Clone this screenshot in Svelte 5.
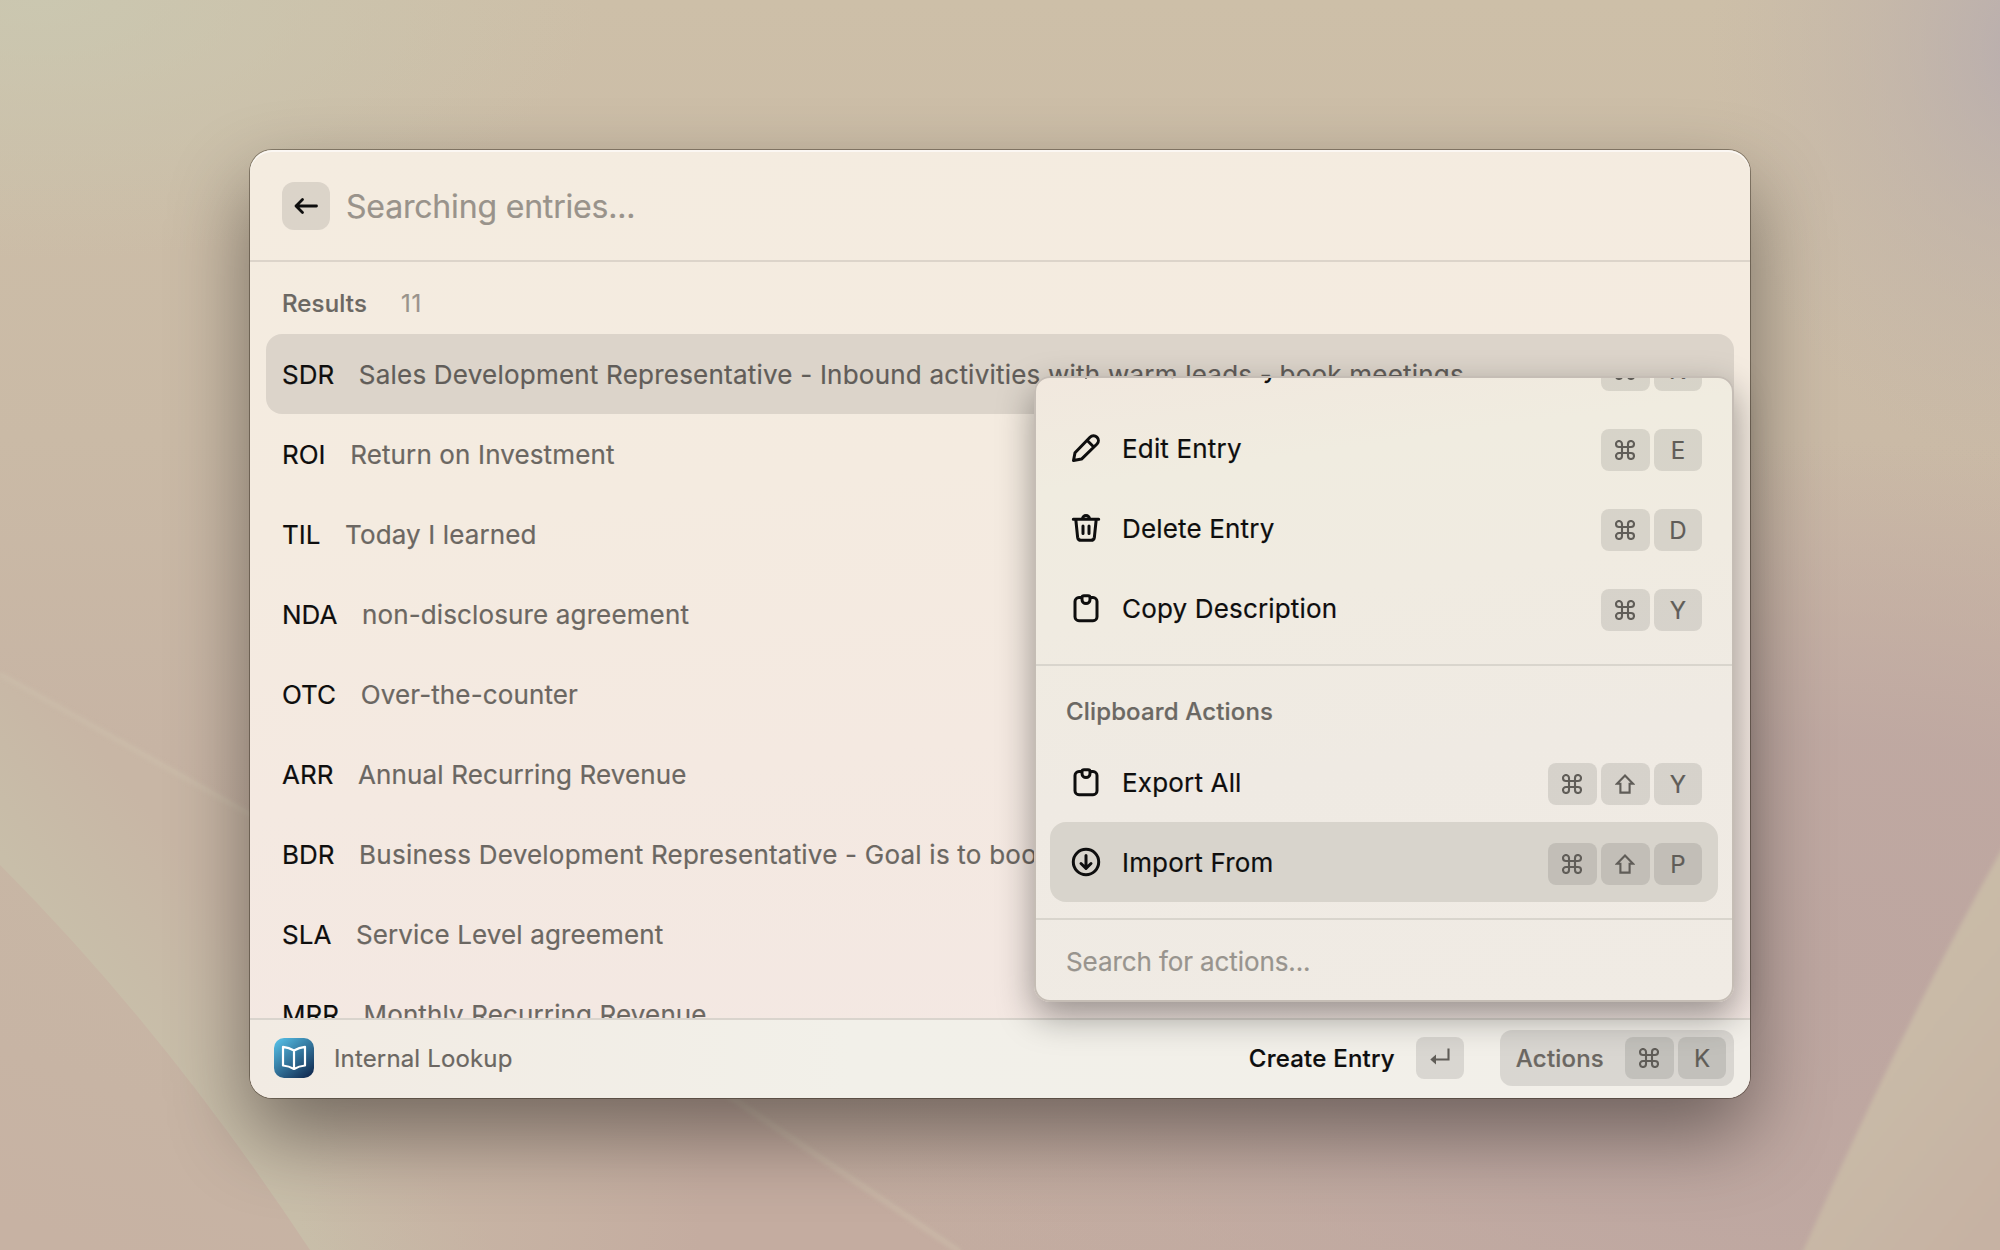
<script>
  const entries = [
    ['SDR', 'Sales Development Representative - Inbound activities with warm leads - book meetings'],
    ['ROI', 'Return on Investment'],
    ['TIL', 'Today I learned'],
    ['NDA', 'non-disclosure agreement'],
    ['OTC', 'Over-the-counter'],
    ['ARR', 'Annual Recurring Revenue'],
    ['BDR', 'Business Development Representative - Goal is to boo'],
    ['SLA', 'Service Level agreement'],
    ['MRR', 'Monthly Recurring Revenue'],
  ];
  const entryActions = [
    { icon: 'plus', label: 'Create Entry', keys: ['cmd', 'N'] },
    { icon: 'pencil', label: 'Edit Entry', keys: ['cmd', 'E'] },
    { icon: 'trash', label: 'Delete Entry', keys: ['cmd', 'D'] },
    { icon: 'clipboard', label: 'Copy Description', keys: ['cmd', 'Y'] },
  ];
  const clipboardActions = [
    { icon: 'clipboard', label: 'Export All', keys: ['cmd', 'shift', 'Y'] },
    { icon: 'download', label: 'Import From', keys: ['cmd', 'shift', 'P'], active: true },
  ];
</script>

{#snippet key(k)}
  <kbd class:wide={k === 'cmd' || k === 'shift'}>
    {#if k === 'cmd'}
      <svg class="glyph" viewBox="0 0 20 20"><path d="M7 7V4A3 3 0 1 0 4 7H16A3 3 0 1 0 13 4V16A3 3 0 1 0 16 13H4A3 3 0 1 0 7 16Z" /></svg>
    {:else if k === 'shift'}
      <svg class="glyph" viewBox="0 0 20 20"><path d="M10 1.6L18 9.8H14.6V18.6H5.4V9.8H2Z" /></svg>
    {:else if k === 'enter'}
      <svg class="glyph" viewBox="0 0 20 20"><path d="M18.5 .5V11.5H5" /><path class="solid" d="M.3 11.500L6 6.600V16.400Z" /></svg>
    {:else}{k}{/if}
  </kbd>
{/snippet}

{#snippet action(a)}
  <div class="action" class:active={a.active}>
    <svg class="icon" viewBox="0 0 32 32">
      {#if a.icon === 'pencil'}
        <path d="M3.500 28.500L5 20.800L20 5.200A4.800 4.800 0 0 1 27 12L11.500 27.100ZM17 8.200L23.800 15" />
      {:else if a.icon === 'trash'}
        <path d="M3.300 7.300H28.700M12.500 7A3.500 3.500 0 0 1 19.500 7M5.800 7.500L7.600 25.200Q8 28.300 11 28.300H21Q24 28.300 24.400 25.200L26.200 7.500M13 14V21.600M19 14V21.600" />
      {:else if a.icon === 'clipboard'}
        <path d="M12 5.600H9A4 4 0 0 0 5 9.600V24.700A4 4 0 0 0 9 28.700H23A4 4 0 0 0 27 24.700V9.600A4 4 0 0 0 23 5.600H20M12 5.600Q12 3.700 14 3.700H18Q20 3.700 20 5.600V7.600A4 4 0 0 1 12 7.600Z" />
      {:else if a.icon === 'download'}
        <circle cx="16" cy="16" r="12.700" /><path d="M16 9.500V22M11 17.500L16 22.300L21 17.500" />
      {:else}
        <path d="M16 5V25M6 16H26" />
      {/if}
    </svg>
    <span class="label">{a.label}</span>
    <span class="keys">{#each a.keys as k}{@render key(k)}{/each}</span>
  </div>
{/snippet}

<main>
  <svg class="wallpaper" viewBox="0 0 2000 1250" preserveAspectRatio="none">
    <defs>
      <linearGradient id="base" x1="0" y1="0" x2="0" y2="1">
        <stop offset="0" stop-color="#cdbfa8" /><stop offset=".35" stop-color="#cabaa6" />
        <stop offset=".6" stop-color="#c7b4a4" /><stop offset="1" stop-color="#c3aca0" />
      </linearGradient>
      <radialGradient id="green"><stop offset="0" stop-color="#cac9b2" stop-opacity=".8" /><stop offset="1" stop-color="#cac9b2" stop-opacity="0" /></radialGradient>
      <radialGradient id="violet"><stop offset="0" stop-color="#b3a9b0" stop-opacity=".8" /><stop offset=".45" stop-color="#bdb0ab" stop-opacity=".5" /><stop offset="1" stop-color="#c2b4a9" stop-opacity="0" /></radialGradient>
      <radialGradient id="rose"><stop offset="0" stop-color="#bda6a0" /><stop offset=".45" stop-color="#bea7a1" stop-opacity=".9" /><stop offset="1" stop-color="#c2aaa2" stop-opacity="0" /></radialGradient>
      <linearGradient id="band" gradientUnits="userSpaceOnUse" x1="150" y1="1040" x2="262" y2="950">
        <stop offset="0" stop-color="#c8bea9" /><stop offset="1" stop-color="#c8b6a5" />
      </linearGradient>
      <linearGradient id="lower" gradientUnits="userSpaceOnUse" x1="300" y1="1200" x2="700" y2="1250">
        <stop offset="0" stop-color="#c6b1a2" stop-opacity="0" /><stop offset="1" stop-color="#c4aca0" />
      </linearGradient>
      <linearGradient id="corner" x1=".6" y1="0" x2=".3" y2="1">
        <stop offset="0" stop-color="#c8b7a5" /><stop offset=".6" stop-color="#c7b4a4" /><stop offset="1" stop-color="#c7b2a3" />
      </linearGradient>
      <linearGradient id="right" x1=".2" y1="0" x2=".8" y2="1">
        <stop offset="0" stop-color="#cabda7" /><stop offset=".5" stop-color="#c9baa7" /><stop offset="1" stop-color="#c6b2a3" />
      </linearGradient>
      <filter id="soft" x="-10%" y="-10%" width="120%" height="120%"><feGaussianBlur stdDeviation="2" /></filter>
    </defs>
    <rect width="2000" height="1250" fill="url(#base)" />
    <ellipse cx="40" cy="0" rx="560" ry="260" fill="url(#green)" />
    <ellipse cx="2030" cy="50" rx="320" ry="420" fill="url(#violet)" />
    <ellipse cx="1800" cy="980" rx="1000" ry="540" fill="url(#rose)" />
    <path d="M0 672L250 812L735 1098L960 1250H0Z" fill="url(#band)" />
    <path d="M0 672L250 812L735 1098L960 1250H0Z" fill="url(#lower)" />
    <path d="M0 674L250 814L735 1100L960 1252" fill="none" stroke="#cdbfac" stroke-width="5" opacity=".6" filter="url(#soft)" />
    <path d="M0 865Q165 1030 310 1250H0Z" fill="url(#corner)" />
    <path d="M2010 835Q1905 1020 1801 1256H2010Z" fill="url(#right)" filter="url(#soft)" />
  </svg>

  <section class="window">
    <header>
      <span class="back">
        <svg viewBox="0 0 24 24"><path d="M22.500 12H2M8.500 5.500L2 12L8.500 18.500" /></svg>
      </span>
      <span class="query">Searching entries...</span>
    </header>

    <div class="list">
      <h2>Results <span>11</span></h2>
      {#each entries as [term, text], i}
        <div class="row" class:selected={i === 0}><b>{term}</b><span class:long={text.length > 40}>{text}</span></div>
      {/each}
    </div>

    <footer>
      <span class="app">
        <svg viewBox="0 0 40 40">
          <defs><linearGradient id="badge" x1=".1" y1="0" x2=".9" y2="1"><stop offset="0" stop-color="#55bfe6" /><stop offset="1" stop-color="#10284f" /></linearGradient></defs>
          <rect width="40" height="40" rx="10" fill="url(#badge)" />
          <path d="M20 12.500Q15 9.500 9 8.800V27.500Q15 28 20 31Q25 28 31 27.500V8.800Q25 9.500 20 12.500V31" fill="none" stroke="#fff" stroke-width="2.200" stroke-linejoin="round" />
        </svg>
      </span>
      <span class="name">Internal Lookup</span>
      <span class="primary">Create Entry</span>
      {@render key('enter')}
      <span class="actions"><em>Actions</em>{@render key('cmd')}{@render key('K')}</span>
    </footer>

    <aside>
      <div class="scroll">
        {#each entryActions as a}{@render action(a)}{/each}
        <h3>Clipboard Actions</h3>
        {#each clipboardActions as a}{@render action(a)}{/each}
      </div>
      <div class="filter">Search for actions...</div>
    </aside>
  </section>
</main>

<style>
  :global(body) { margin: 0; }
  main {
    position: relative;
    display: grid;
    place-items: start center;
    width: 2000px;
    height: 1250px;
    padding-top: 150px;
    box-sizing: border-box;
    overflow: hidden;
    font-family: Inter, 'Liberation Sans', sans-serif;
    color: #0e0e0e;
    -webkit-text-stroke: .2px;
  }
  .wallpaper { position: absolute; inset: 0; width: 100%; height: 100%; }
  .window {
    position: relative;
    display: flex;
    flex-direction: column;
    width: 1500px;
    height: 948px;
    border-radius: 22px;
    background: linear-gradient(174deg, #f4ece0 0%, #f4ebe0 35%, #f4e9e1 60%, #f3e7e3 100%);
    box-shadow: 0 0 0 1px rgba(40, 30, 20, .42), 0 36px 80px rgba(0, 0, 0, .42);
  }
  header {
    display: flex;
    align-items: center;
    gap: 16px;
    height: 110px;
    padding: 2px 32px 0;
    box-sizing: border-box;
    box-shadow: inset 0 2px rgba(255, 255, 255, .6);
    border-radius: 22px 22px 0 0;
    flex: none;
  }
  .back {
    display: grid;
    place-items: center;
    width: 48px;
    height: 48px;
    border-radius: 12px;
    background: rgba(0, 0, 0, .1);
  }
  .back svg { width: 24px; height: 24px; fill: none; stroke: #0e0e0e; stroke-width: 2.8; stroke-linecap: round; stroke-linejoin: round; }
  .query { font-size: 32px; letter-spacing: -.18px; color: #99938b; }
  .list { flex: 1; min-height: 0; padding: 0 16px; overflow: hidden; border-top: 2px solid #dcd4ca; }
  h2, h3 { margin: 0; font-size: 24px; font-weight: 500; letter-spacing: .15px; color: #6b6863; }
  h2 { display: flex; gap: 34px; height: 72px; padding: 11px 16px 0; box-sizing: border-box; line-height: 62px; }
  h2 span { font-weight: 400; letter-spacing: .6px; color: #99938b; }
  .row { display: flex; gap: 24.6px; align-items: center; height: 80px; padding: 0 16px; border-radius: 16px; font-size: 26px; white-space: nowrap; }
  .row b { font-weight: 400; }
  .row span { letter-spacing: .13px; color: #6b6762; }
  .row .long { letter-spacing: .22px; }
  .row.selected { background: #dcd4ca; }
  .row.selected span { color: #615d59; }
  footer {
    display: flex;
    align-items: center;
    flex: none;
    height: 76px;
    padding: 0 16px 2px 24px;
    border-radius: 0 0 22px 22px;
    border-top: 2px solid #d9d4cd;
    background: linear-gradient(90deg, #f2ebe3, #f2f0e9 40%, #f2efe9);
    font-size: 24px;
    color: #6b6762;
  }
  .app { display: flex; width: 40px; height: 40px; }
  .name { margin-left: 20px; letter-spacing: .15px; }
  .primary { margin: 0 21px 0 auto; color: #0e0e0e; font-weight: 500; letter-spacing: .22px; }
  kbd {
    display: inline-flex;
    align-items: center;
    justify-content: center;
    width: 48px;
    height: 42px;
    border-radius: 8px;
    background: rgba(0, 0, 0, .1);
    color: #605d58;
    font: 400 24px Inter, sans-serif;
  }
  .wide { width: 49px; padding-right: 1px; box-sizing: border-box; }
  .glyph { width: 20px; height: 20px; fill: none; stroke: #605d58; stroke-width: 2.1; }
  .glyph .solid { fill: #605d58; stroke: none; }
  .actions { display: flex; align-items: center; gap: 4px; height: 56px; margin-left: 36px; padding: 0 8px 0 16px; border-radius: 12px; background: rgba(0, 0, 0, .1); }
  em { margin-right: 17px; font-style: normal; font-weight: 500; letter-spacing: .2px; }
  aside {
    position: absolute;
    left: 784px;
    top: 226px;
    display: flex;
    flex-direction: column;
    width: 700px;
    height: 626px;
    box-sizing: border-box;
    border: 2px solid #c5bdb5;
    border-radius: 16px;
    background: linear-gradient(172deg, #f1e8de 0%, #f0ece0 16%, #f0ebe1 35%, #efeae3 60%, #f0ebe4 100%);
    box-shadow: 0 14px 36px rgba(0, 0, 0, .38);
  }
  .scroll { display: flex; flex-direction: column; justify-content: flex-end; height: 524px; padding: 0 14px 16px; overflow: hidden; border-bottom: 2px solid #d9d5cd; }
  .action { display: flex; flex: none; align-items: center; height: 80px; padding: 0 16px 0 20px; border-radius: 16px; font-size: 26px; letter-spacing: .17px; box-sizing: border-box; }
  .active { background: #d8d4cc; }
  .icon { width: 32px; height: 32px; fill: none; stroke: #0e0e0e; stroke-width: 3; stroke-linecap: round; stroke-linejoin: round; }
  .label { margin-left: 20px; }
  .keys { display: flex; gap: 4px; margin: 4px 0 0 auto; letter-spacing: 0; }
  h3 { flex: none; height: 76px; margin: 16px -14px 0; padding: 0 30px; border-top: 2px solid #d9d5cd; line-height: 91px; }
  .filter { height: 80px; padding: 0 30px; font-size: 26px; letter-spacing: -.1px; line-height: 84px; color: #98948e; }
</style>
